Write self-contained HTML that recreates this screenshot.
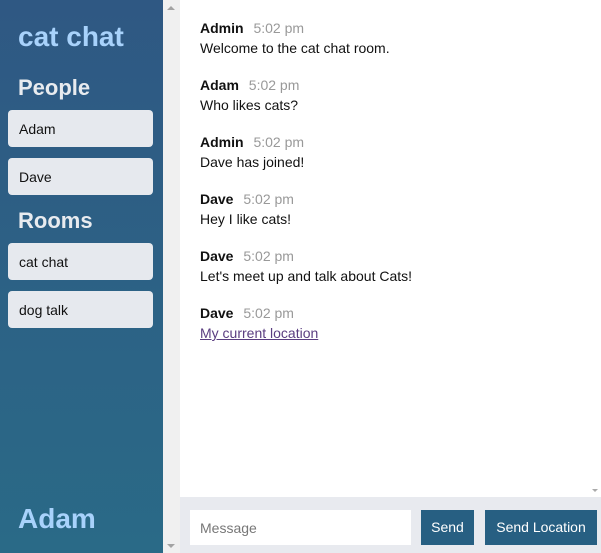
<!DOCTYPE html>
<html><head><meta charset="utf-8"><style>
*{box-sizing:border-box;margin:0;padding:0}
body{width:601px;height:553px;overflow:hidden;font-family:"Liberation Sans",Arial,sans-serif;background:#fff;position:relative}
.side{position:absolute;left:0;top:0;width:163px;height:553px;background:linear-gradient(#2f5883,#2a6a87)}
.sb{position:absolute;left:163px;top:0;width:17px;height:553px;background:#f0f0f0}
.t{position:absolute;left:18px;font-weight:bold}
.btn{position:absolute;left:8px;width:145px;height:37px;background:#e6e9ee;border-radius:4px;font-size:14px;padding:11px 0 0 11px;color:#111}
.msg{position:absolute;left:200px;font-size:14px;color:#111}
.msg b{font-weight:bold;margin-right:6px}
.msg span{color:#999}
.msg p{margin-top:4px}
.foot{position:absolute;left:180px;top:497px;width:421px;height:56px;background:#e8eaef}
.in{position:absolute;left:190px;top:510px;width:221px;height:35px;background:#fff;font-size:14px;color:#777;padding:10px 0 0 10px}
.b{position:absolute;top:510px;height:35px;background:#275f82;color:#fff;font-size:14px;text-align:center;line-height:35px}
.rsb{position:absolute;left:590px;top:0;width:11px;height:497px;background:#fff}
</style></head><body>
<div class="side"></div>
<div class="sb"><div style="position:absolute;left:4px;top:6px;border:4px solid transparent;border-bottom:4px solid #a3a3a3;border-top:0"></div><div style="position:absolute;left:4px;top:544px;border:4px solid transparent;border-top:4px solid #a3a3a3;border-bottom:0"></div></div>
<div class="t" style="top:21px;font-size:28px;color:#a8d2fb">cat chat</div>
<div class="t" style="top:75px;font-size:22px;color:#e8ebef">People</div>
<div class="btn" style="top:110px">Adam</div>
<div class="btn" style="top:158px">Dave</div>
<div class="t" style="top:208px;font-size:22px;color:#e8ebef">Rooms</div>
<div class="btn" style="top:243px">cat chat</div>
<div class="btn" style="top:291px">dog talk</div>
<div class="t" style="top:503px;font-size:28px;color:#a8d2fb">Adam</div>
<div class="msg" style="top:20px"><b>Admin</b> <span>5:02 pm</span><p>Welcome to the cat chat room.</p></div>
<div class="msg" style="top:77px"><b>Adam</b> <span>5:02 pm</span><p>Who likes cats?</p></div>
<div class="msg" style="top:134px"><b>Admin</b> <span>5:02 pm</span><p>Dave has joined!</p></div>
<div class="msg" style="top:191px"><b>Dave</b> <span>5:02 pm</span><p>Hey I like cats!</p></div>
<div class="msg" style="top:248px"><b>Dave</b> <span>5:02 pm</span><p>Let's meet up and talk about Cats!</p></div>
<div class="msg" style="top:305px"><b>Dave</b> <span>5:02 pm</span><p><a style="color:#5a3d80;text-decoration:underline">My current location</a></p></div>
<div class="rsb"><div style="position:absolute;left:2px;top:489px;border:3px solid transparent;border-top:3px solid #aaa;border-bottom:0"></div></div>
<div class="foot"></div>
<div class="in">Message</div>
<div class="b" style="left:421px;width:53px">Send</div>
<div class="b" style="left:485px;width:112px">Send Location</div>
</body></html>
